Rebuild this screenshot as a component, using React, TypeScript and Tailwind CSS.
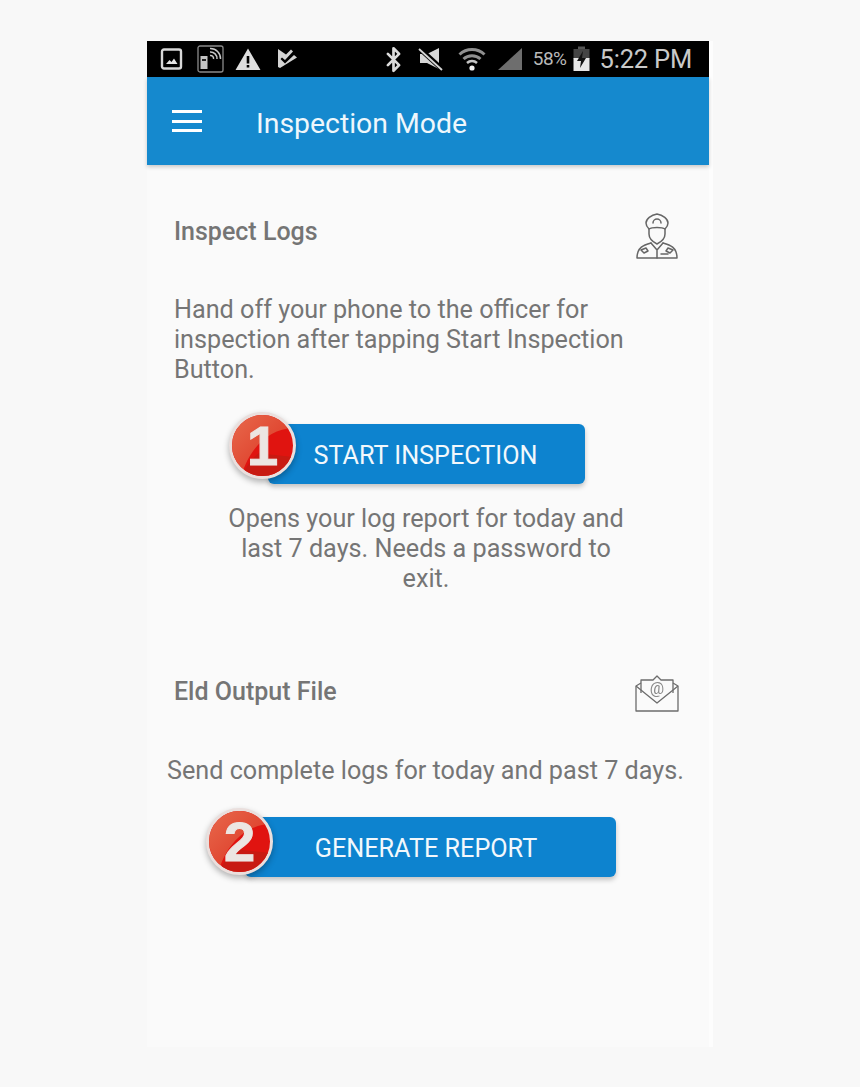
import React from 'react';
import { Bluetooth } from 'lucide-react';

function StatusIcons() {
  return (
    <div className="flex items-center">
      {/* picture */}
      <svg width="24" height="24" viewBox="0 0 24 24" className="ml-[13px]">
        <rect x="2" y="2.5" width="19" height="19" rx="2" fill="none" stroke="#d8d8d8" strokeWidth="2.4" />
        <path d="M6 17l3.500-4 2 2 2.500-3.500 3.500 5.500z" fill="#e4e4e4" />
      </svg>
      {/* nfc card */}
      <svg width="28" height="28" viewBox="0 0 28 28" className="ml-[13px]">
        <rect x="1" y="1" width="25" height="26" rx="2" fill="none" stroke="#8a8a8a" strokeWidth="1.300" />
        <rect x="3.500" y="11" width="7" height="13" fill="#c4c4c4" />
        <rect x="5" y="14" width="4" height="2" fill="#222" />
        <path d="M13 3.500a10 10 0 0 1 10.500 10.500M13 7a6.500 6.500 0 0 1 7 7M13 10.500a3 3 0 0 1 3.500 3.500" fill="none" stroke="#c8c8c8" strokeWidth="1.500" />
      </svg>
      {/* warning */}
      <svg width="26" height="24" viewBox="0 0 26 24" className="ml-[10px]">
        <path fillRule="evenodd" d="M13 1.500L25.500 23H.5zM11.700 9v7.500h2.600V9zM11.700 18v2.500h2.600V18z" fill="#dedede" />
      </svg>
      {/* check tag */}
      <svg width="22" height="24" viewBox="0 0 22 24" className="ml-[15px]">
        <path d="M2 2l8 5.500L15 2.500l2 2L9 13l-3-2.500-1.500 1.500L9 16.500 18 8l3 2.500L4 21l-2-1z" fill="#d4d4d4" />
      </svg>
    </div>
  );
}

function SystemIcons() {
  return (
    <div className="flex items-center text-[#cfcfcf]">
      <Bluetooth size={27} strokeWidth={2.4} className="text-[#dcdcdc]" />
      {/* muted */}
      <svg width="26" height="26" viewBox="0 0 26 26" className="ml-[11px]">
        <path d="M2 8h5l2 0 12-6v21L9 17H2z" fill="#d6d6d6" />
        <path d="M1 2l24 22" stroke="#000" strokeWidth="5" />
        <path d="M1 3l23 21" stroke="#d6d6d6" strokeWidth="1.800" />
      </svg>
      {/* wifi */}
      <svg width="28" height="26" viewBox="0 0 28 26" className="ml-[14px]">
        <path d="M1.500 8.500a18 18 0 0 1 25 0M5.500 13a12.500 12.500 0 0 1 17 0" fill="none" stroke="#8f8f8f" strokeWidth="3" />
        <path d="M9 17a7.500 7.500 0 0 1 10 0" fill="none" stroke="#c4c4c4" strokeWidth="2.500" />
        <circle cx="14" cy="22" r="2.600" fill="#f0f0f0" />
      </svg>
      {/* signal */}
      <svg width="25" height="24" viewBox="0 0 25 24" className="ml-[11px]">
        <path d="M25 1v22H1z" fill="#6e6e6e" />
      </svg>
      <span className="ml-[11px] text-[19px] tracking-[-0.5px] text-[#b9b9b9]">58%</span>
      {/* battery */}
      <svg width="17" height="26" viewBox="0 0 17 26" className="ml-[6px]">
        <rect x="5" y="0.500" width="7" height="3" fill="#555" />
        <rect x="0.500" y="3" width="16" height="10" fill="#444" />
        <rect x="0.500" y="12" width="16" height="13" fill="#e6e6e6" />
        <path d="M10 5L4 15h4l-1 7 6-10H9z" fill="#111" />
      </svg>
      <span className="ml-[10px] text-[25.500px] tracking-[-0.2px] text-[#c9c9c9]">5:22 PM</span>
    </div>
  );
}

function OfficerIcon() {
  return (
    <svg width="44" height="48" viewBox="0 0 44 48" fill="none" stroke="#666" strokeWidth="1.500" strokeLinejoin="round" strokeLinecap="round" className="blur-[0.4px]">
      <path d="M11 10c0-4 5-8 11-9 6 1 11 5 11 9 0 3-2 5-3 6-3-2-13-2-16 0-1-1-3-3-3-6z" />
      <path d="M18 10a4 4 0 0 1 8 0" />
      <path d="M14 16v5c0 5 4 8 8 10 4-2 8-5 8-10v-5" />
      <path d="M16 30c-7 2-14 4-14 15h40c0-11-7-13-14-15" />
      <path d="M16 30l6 7 6-7M22 37v8M6 37l5-2 2 3-4 2zM38 37l-5-2-2 3 4 2zM26 41h7" />
    </svg>
  );
}

function MailIcon() {
  return (
    <svg width="44" height="40" viewBox="0 0 44 40" fill="none" stroke="#6c6c6c" strokeWidth="1.300" strokeLinejoin="round" className="blur-[0.4px]">
      <path d="M6 20V7h12l4-4 4 4h12v13" />
      <path d="M6 10L1 13v25h42V13l-5-3" />
      <path d="M1 13l21 17 21-17" />
      <text x="22" y="21" textAnchor="middle" fontSize="16" fill="#888" stroke="none" fontFamily="Roboto, sans-serif">@</text>
    </svg>
  );
}

function Badge({ n, id, offset }: { n: string; id: string; offset: string }) {
  return (
    <div className={`absolute flex h-[67px] w-[67px] items-center justify-center overflow-hidden rounded-full border-[3px] border-[#eadfdd] bg-[#e01410] shadow-[0_3px_6px_rgba(0,0,0,0.3)] ${offset}`}>
      <svg width="61" height="61" viewBox="0 0 64 64" className="absolute inset-0">
        <defs>
          <linearGradient id={id} x1="0" y1="0" x2="1" y2="1">
            <stop offset="0" stopColor="#e8694c" />
            <stop offset="1" stopColor="#d92c1c" />
          </linearGradient>
        </defs>
        <path d="M0 0h64v14C40 14 18 34 10 64H0z" fill={`url(#${id})`} />
        <path d="M10 64C14 56 20 46 28 40L64 44V64z" fill="#c81a12" />
      </svg>
      <span className="relative font-['Liberation_Sans',sans-serif] text-[56px] font-bold leading-none text-[#ece6e2] [-webkit-text-stroke:1px_#ece6e2]">{n}</span>
    </div>
  );
}

function ActionButton({ label, n, width, id, textOffset, badgeOffset }: { label: string; n: string; width: string; id: string; textOffset: string; badgeOffset: string }) {
  return (
    <div className={`relative flex h-[60px] items-center justify-center rounded-md bg-[#0d83cf] shadow-[0_3px_5px_rgba(0,0,0,0.22)] ${width}`}>
      <Badge n={n} id={id} offset={badgeOffset} />
      <span className={`pt-[3px] text-[25.200px] text-[#f2f8fc] ${textOffset}`}>{label}</span>
    </div>
  );
}

export default function App() {
  return (
    <div className="min-h-[1087px] bg-[#f8f8f8] pl-[147px] pt-[41px] font-['Roboto',sans-serif]">
      <div className="h-[1006px] w-[566px] border-r-[4px] border-[#fdfdfd] bg-[#fafafa]">
        <div className="flex h-[36px] items-center justify-between bg-black pr-[17px]">
          <StatusIcons />
          <SystemIcons />
        </div>

        <header className="flex h-[88px] items-center bg-[#1589ce] shadow-[0_2px_4px_rgba(0,0,0,0.2)]">
          <div className="ml-[25px] flex w-[30px] flex-col gap-[6.500px]">
            <span className="h-[3px] bg-white" />
            <span className="h-[3px] bg-white" />
            <span className="h-[3px] bg-white" />
          </div>
          <h1 className="ml-[54px] pt-[7px] text-[28.400px] text-[#eef7fc]">Inspection Mode</h1>
        </header>

        <section className="px-[27px] pt-[48px] text-[#757575]">
          <div className="flex items-start justify-between pr-[3px]">
            <h2 className="text-[25px] font-medium leading-[38px]">Inspect Logs</h2>
            <div><OfficerIcon /></div>
          </div>
          <p className="mt-[34px] text-[25.200px] leading-[30px]">
            Hand off your phone to the officer for
            <br />
            inspection after tapping Start Inspection
            <br />
            Button.
          </p>
          <div className="ml-[94px] mt-[39px]">
            <ActionButton label="START INSPECTION" n="1" width="w-[317px]" id="badge-a" textOffset="ml-[-2px]" badgeOffset="left-[-39px] top-[-12px]" />
          </div>
          <p className="mt-[20px] pr-[4px] text-center text-[25.200px] leading-[30px]">
            Opens your log report for today and
            <br />
            last 7 days. Needs a password to
            <br />
            exit.
          </p>

          <div className="mt-[79px] flex items-start justify-between pr-[3px]">
            <h2 className="text-[25px] font-medium leading-[38px]">Eld Output File</h2>
            <div><MailIcon /></div>
          </div>
          <p className="ml-[-7px] mt-[43px] whitespace-nowrap text-[25.200px] leading-[30px]">Send complete logs for today and past 7 days.</p>
          <div className="ml-[71px] mt-[31px]">
            <ActionButton label="GENERATE REPORT" n="2" width="w-[371px]" id="badge-b" textOffset="ml-[-9px]" badgeOffset="left-[-39px] top-[-9px]" />
          </div>
        </section>
      </div>
    </div>
  );
}
